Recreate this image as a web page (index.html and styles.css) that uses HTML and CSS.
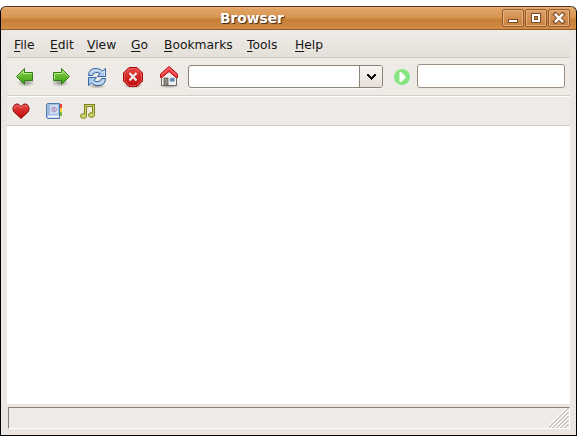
FILE: index.html
```html
<!DOCTYPE html>
<html lang="en">
<head>
<meta charset="utf-8">
<title>Browser</title>
<link rel="stylesheet" href="styles.css">
</head>
<body>
<div class="window">
  <header class="titlebar">
    <h1 class="title">Browser</h1>
    <div class="controls">
      <span class="control"><svg width="20" height="16"><path d="M5 9h10v4H5z" fill="#7c4a20"/><path d="M6 10h8v2H6z" fill="#fff"/></svg></span>
      <span class="control"><svg width="20" height="16"><path d="M5 3h10v10H5z" fill="#7c4a20"/><path fill-rule="evenodd" d="M6 4h8v8H6zM8 6v4h4V6z" fill="#fff"/><path d="M8.5 6.5h3v3h-3z" fill="#c98447" stroke="#7c4a20"/></svg></span>
      <span class="control"><svg width="20" height="16"><path d="M6.500 4.500l7 7m0-7l-7 7" stroke="#7c4a20" stroke-width="4.4" stroke-linecap="square"/><path d="M6.800 4.800l6.400 6.400m0-6.400l-6.400 6.400" stroke="#fff" stroke-width="2.5" stroke-linecap="square"/></svg></span>
    </div>
  </header>
  <div class="content">
    <nav class="menubar">
      <span class="menu file"><u>F</u>ile</span>
      <span class="menu edit"><u>E</u>dit</span>
      <span class="menu view"><u>V</u>iew</span>
      <span class="menu go"><u>G</u>o</span>
      <span class="menu bookmarks"><u>B</u>ookmarks</span>
      <span class="menu tools"><u>T</u>ools</span>
      <span class="menu"><u>H</u>elp</span>
    </nav>
    <div class="toolbar">
      <svg class="tool" width="24" height="24" viewBox="0 0 24 24">
        <defs>
          <linearGradient id="green" x2="0" y2="1"><stop stop-color="#8bd64c"/><stop offset="1" stop-color="#3c9b13"/></linearGradient>
          <radialGradient id="shadow"><stop stop-color="#55514b" stop-opacity=".6"/><stop offset="1" stop-color="#55514b" stop-opacity="0"/></radialGradient>
          <linearGradient id="red" x2="0" y2="1"><stop stop-color="#e84848"/><stop offset="1" stop-color="#bd0707"/></linearGradient>
        </defs>
        <ellipse cx="13" cy="17.500" rx="9" ry="4.500" fill="url(#shadow)"/>
        <path d="M3.500 11.500L11.500 3.500V7.500H19.500V15.500H11.500V19.500Z" fill="url(#green)" stroke="#347b16"/>
        <path d="M5 11.500l5.500-5.500v2.500h8" fill="none" stroke="#b9eb91"/>
      </svg>
      <svg class="tool" width="24" height="24" viewBox="0 0 24 24">
        <ellipse cx="11" cy="17.500" rx="9" ry="4.500" fill="url(#shadow)"/>
        <path d="M20.500 11.500L12.500 3.500V7.500H4.500V15.500H12.500V19.500Z" fill="url(#green)" stroke="#347b16"/>
        <path d="M19 11.500l-5.500-5.500v2.500h-8v6" fill="none" stroke="#b9eb91"/>
      </svg>
      <svg class="tool" width="24" height="24" viewBox="0 0 24 24">
        <ellipse cx="12" cy="21" rx="9" ry="2.500" fill="url(#shadow)"/>
        <path id="arc" d="M3.500 10.500Q3.500 3.500 11 3.500Q15 3.500 17.500 6L20.500 3.500V11.500H12.500L15 8.500Q13 7 10.500 7.500Q8 8.500 7.500 10.500Z" fill="#a9c7e7" stroke="#3465a4"/>
        <path d="M5 9Q6 5 11 5Q15 5 17.500 7.500L19.500 6V10.500" fill="none" stroke="#e0ebf7"/>
        <g transform="rotate(180 12 12)"><use href="#arc"/><path d="M5 9Q6 5 11 5Q15 5 17.500 7.500" fill="none" stroke="#dce8f5"/></g>
      </svg>
      <svg class="tool" width="24" height="24" viewBox="0 0 24 24">
        <ellipse cx="12" cy="20.500" rx="10" ry="3" fill="url(#shadow)"/>
        <path d="M8 2.500H16L21.500 8V16L16 21.500H8L2.500 16V8Z" fill="url(#red)" stroke="#a40000"/>
        <path d="M8.500 3.500h7l5 5v7l-5 5h-7l-5-5v-7z" fill="none" stroke="#ef7070" stroke-opacity=".7"/>
        <path d="M8.500 8l7 7.500m0-7.500l-7 7.500" stroke="#f2eeee" stroke-width="2.100"/>
      </svg>
      <svg class="tool home" width="24" height="24" viewBox="0 0 24 24">
        <ellipse cx="12" cy="20.500" rx="11" ry="3" fill="url(#shadow)"/>
        <path d="M4.500 11.500L12 5L19.500 11.500V20.500H4.500Z" fill="#f0f0ed" stroke="#666862"/>
        <path d="M7 13h4v7H7z" fill="#8b8980" stroke="#5f6059" stroke-width=".8"/>
        <path d="M13 13h4.500v3.500H13z" fill="#5682b6" stroke="#a7bbd1" stroke-width=".8"/>
        <path d="M12 1.500L3.500 9V12.500H5L12 6.500L19 12.500H20.500V9Z" fill="#ef3c40" stroke="#bd1018"/>
        <path d="M4.500 9.800L12 3.200L19.500 9.800" fill="none" stroke="#ff7777"/>
      </svg>
      <div class="address"><span class="address-field"></span><span class="dropdown"><svg width="9" height="6"><path d="M0 0h2v1h1v1h1v1h1V2h1V1h1V0h2v2H8v1H7v1H6v1H5v1H4V5H3V4H2V3H1V2H0z" fill="#111"/></svg></span></div>
      <svg class="start" width="16" height="16" viewBox="0 0 16 16"><circle cx="8" cy="8" r="8" fill="#86e581"/><path d="M5.500 3H7L11.500 7.500V9L7 13H5.500Z" fill="#fff"/></svg>
      <div class="search"></div>
    </div>
    <div class="linksbar">
      <svg width="18" height="18" viewBox="0 0 18 18"><path d="M9 16.500L1.500 9.500Q0 6 2 3.500Q4 .8 7 2.500L9 4.500L11 2.500Q14 .8 16 3.500Q18 6 16.500 9.500Z" fill="url(#red)" stroke="#8e1712"/><path d="M2.500 6.500Q3 2.500 6 3.500L9 6l3-2.500q2.500-.8 3.500 2" fill="none" stroke="#ee6c60"/></svg>
      <svg class="book" width="18" height="18" viewBox="0 0 18 18"><path d="M14 2h3v4h-3z" fill="#ef4035"/><path d="M14 6h3v4h-3z" fill="#f6d32d"/><path d="M14 10h3v4h-3z" fill="#79ba3d"/><path d="M2.500 1.500H14.500V16.500H2.500L1.500 15.500V2.500Z" fill="#9dbbe0" stroke="#5279ad"/><path d="M5 3h8v9H5z" fill="#d3dff0"/><path d="M3 14.500h11" stroke="#f8fafd" stroke-width="2"/><circle cx="9" cy="7.500" r="2.500" fill="#d5cde5" stroke="#a398cb"/><circle cx="9" cy="7.500" r="1" fill="#b77caa"/></svg>
      <svg class="music" width="18" height="18" viewBox="0 0 18 18"><g fill="none" stroke-linejoin="miter"><path d="M6.500 13.500V3.500H14.500V12.500" stroke="#7b821e" stroke-width="3"/><g fill="#d1d46d" stroke="#7b821e"><ellipse cx="4.500" cy="14" rx="3" ry="2.300"/><ellipse cx="12.500" cy="13" rx="3" ry="2.300"/></g><path d="M6.500 14V3.500H14.500V13" stroke="#d1d46d"/></g></svg>
    </div>
    <main class="page"></main>
    <footer class="statusbar"><svg width="22" height="20"><g fill="none" stroke="#fff" stroke-width="1.200"><path d="M0 20L20 0M4 20L21 3M8 20L21 7M12 20L21 11M16 20L21 15"/></g><g fill="none" stroke="#aaa296"><path d="M1 20.500L21.500 0M5 20.500L21.500 4M9 20.500L21.500 8M13 20.500L21.500 12M17 20.500L21.500 16"/></g></svg></footer>
  </div>
</div>
</body>
</html>
```
FILE: styles.css
```css
* { box-sizing: border-box; }
body {
  margin: 0;
  padding-top: 6px;
  height: 436px;
  background: #fff;
  font-family: "DejaVu Sans", sans-serif;
  color: #171717;
  overflow: hidden;
}
svg { display: block; flex: none; }
.window {
  height: 430px;
  border: 1px solid #000;
  border-top: 0;
  border-radius: 6px 6px 0 0;
  background: #ebe6e2;
  overflow: hidden;
}
.titlebar {
  display: grid;
  grid-template-columns: 1fr auto;
  height: 24px;
  margin: 0 -1px;
  border: 1px solid #52351d;
  border-bottom-color: #905b2b;
  border-radius: 6px 6px 0 0;
  background: linear-gradient(#efb982 0, #e0a263 2px, #d79450 11px, #c67e37 12px, #d38c45 100%);
}
.title {
  margin: 0;
  padding-left: 219px;
  font-size: 13.8px;
  line-height: 22px;
  color: #fff;
  text-shadow: 1px 1px 1px #3c2514;
}
.controls { display: flex; gap: 1px; padding: 2px 6px 0 0; }
.control {
  width: 22px;
  height: 18px;
  border: 1px solid #92592a;
  border-radius: 2px;
  box-shadow: inset 0 0 0 1px #e6b17a;
  background: linear-gradient(#dda067, #c7803d);
}
.content { margin: 0 6px; }
.menubar {
  display: flex;
  height: 28px;
  padding: 1px 0 0 7px;
  border-bottom: 1px solid #d0c7be;
  background: linear-gradient(#efece8, #e4dfd9);
  font-size: 12.3px;
  line-height: 28px;
}
.menu { white-space: nowrap; }
.menu u { text-underline-offset: 2px; text-decoration-thickness: 1px; text-decoration-skip-ink: none; }
.file { width: 36px; }
.edit { width: 37px; }
.view { width: 44px; }
.go { width: 33px; }
.bookmarks { width: 83px; }
.tools { width: 48px; }
.toolbar {
  display: flex;
  align-items: center;
  height: 38px;
  padding: 0 0 1px 6px;
  border-bottom: 1px solid #d5cec7;
  background: #eeebe6;
}
.tool { margin: 2px 12px 0 0; }
.home { margin-right: 7px; }
.address {
  display: flex;
  width: 195px;
  height: 23px;
  margin-top: 1px;
  border: 1px solid #8d8276;
  border-radius: 3px;
  background: #fff;
  box-shadow: 0 1px #f9f7f5;
}
.address-field { flex: 1; }
.dropdown {
  display: grid;
  place-items: center;
  width: 23px;
  border-left: 1px solid #8d8276;
  border-radius: 0 2px 2px 0;
  background: linear-gradient(#f8f6f4, #e6e0da);
}
.start { margin: 2px 7px 0 11px; }
.search {
  width: 148px;
  height: 24px;
  border: 1px solid #9b8d7f;
  border-radius: 3px;
  background: #fff;
}
.linksbar {
  display: flex;
  align-items: center;
  height: 30px;
  padding-left: 5px;
  border-top: 1px solid #fff;
  border-bottom: 1px solid #d5cec7;
  background: #eeebe6;
}
.book { margin-left: 15px; }
.music { margin-left: 16px; }
.page { height: 278px; background: #fff; }
.statusbar {
  display: flex;
  justify-content: flex-end;
  align-items: flex-end;
  height: 22px;
  margin: 3px 0 0 1px;
  border: 1px solid #fff;
  border-top-color: #85817c;
  border-left-color: #85817c;
  background: #eeebe6;
}
```
